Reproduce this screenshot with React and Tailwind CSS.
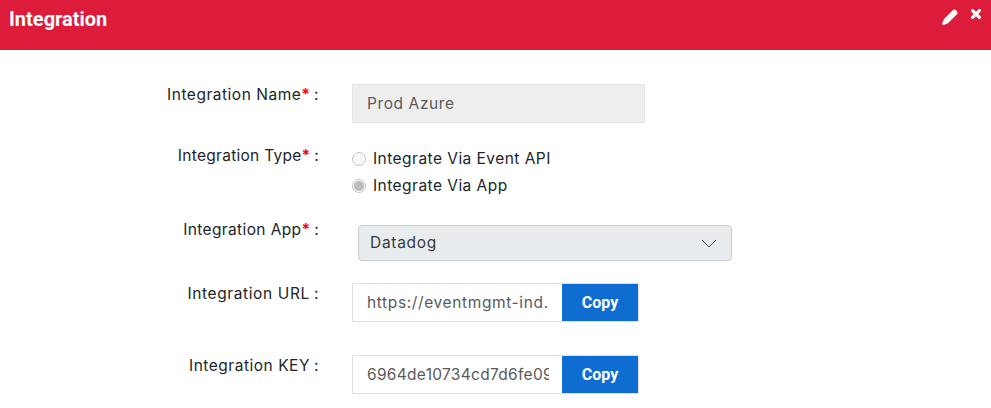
const font = "font-['Inter','Liberation_Sans',sans-serif]";

function Label({ text, required, className }) {
  return (
    <div className={"w-[319px] shrink-0 text-right text-[15.5px] leading-5 text-[#212529] " + className}>
      {text}
      {required && <span className="font-bold tracking-normal text-[#ff0000]">*</span>}
      <span className="ml-1">:</span>
    </div>
  );
}

function Radio({ checked, label }) {
  return (
    <div className="flex h-[27px] items-center">
      <span className="flex h-[14px] w-[14px] items-center justify-center rounded-full border border-[#c4c4c4] bg-[#f8f8f8]">
        {checked && <span className="h-[10px] w-[10px] rounded-full bg-[#bdbdbd]" />}
      </span>
      <span className="ml-[7px] pt-[1px] text-[15.5px] tracking-[0.46px] text-[#212529]">{label}</span>
    </div>
  );
}

function CopyField({ value, className, valueClass }) {
  return (
    <div className={"flex h-[39px] w-[287px] border border-[#dfdfdf] " + className}>
      <div className="w-[209px] pl-[14px]">
        <div className={"w-[182px] overflow-hidden whitespace-nowrap text-[15.5px] leading-[37px] text-[#5a5a5a] " + valueClass}>{value}</div>
      </div>
      <button className="h-[37px] w-[76px] bg-[#0f6cd0] font-['Roboto',sans-serif] text-[16px] font-bold text-white">Copy</button>
    </div>
  );
}

export default function App() {
  return (
    <div className={"h-[408px] w-[991px] overflow-hidden bg-white " + font}>
      <div className="flex h-[50px] items-start justify-between bg-[#dc1c3a] pl-[9px] pr-[10px] text-white">
        <h1 className="mt-[7px] font-['Roboto',sans-serif] text-[20px] font-bold leading-6">Integration</h1>
        <div className="mt-[9px] flex items-start gap-[13px]">
          <svg width="16" height="16" viewBox="0 0 16 16" fill="white">
            <path d="M10.6 1.4c1-1 2.4-1 3.3-.2l.9.9c.9.9.9 2.3-.1 3.3L6 14.2 1.6 15.9c-.9.3-1.8-.6-1.4-1.5L2 10z" />
          </svg>
          <svg width="10" height="10" viewBox="0 0 10 10" stroke="white" strokeWidth="3.2" strokeLinecap="round">
            <path d="M1.6 1.6l6.8 6.8M8.4 1.6L1.6 8.4" />
          </svg>
        </div>
      </div>

      <div className="h-[34px]" />

      <div className="flex h-[39px]">
        <Label text="Integration Name" required className="pt-[1px] tracking-[0.52px]" />
        <div className="ml-[33px] flex h-[39px] w-[293px] items-center border border-[#e4e4e4] bg-[#eeeeee] pl-[14px] text-[15.5px] tracking-[0.6px] text-[#5a5a5a]">
          Prod Azure
        </div>
      </div>

      <div className="mt-[22px] flex">
        <Label text="Integration Type" required className="pt-[1px] tracking-[0.28px]" />
        <div className="ml-[33px] flex flex-col">
          <Radio label="Integrate Via Event API" />
          <Radio checked label="Integrate Via App" />
        </div>
      </div>

      <div className="mt-[26px] flex">
        <Label text="Integration App" required className="-mt-[5px] tracking-[0.38px]" />
        <div className="ml-[39px] flex h-[36px] w-[374px] items-center justify-between rounded-[4px] border border-[#c9cdd1] bg-[#e9ecef] pl-[11px] pr-[14px] text-[15.5px] tracking-[0.7px] text-[#343a40]">
          Datadog
          <svg width="16" height="9" viewBox="0 0 16 9" fill="none" stroke="#495057" strokeWidth="1">
            <path d="M1 1l7 7 7-7" />
          </svg>
        </div>
      </div>

      <div className="mt-[22px] flex">
        <Label text="Integration URL" className="pt-[1px] tracking-[0.62px]" />
        <CopyField className="ml-[33px]" valueClass="tracking-[0.62px]" value="https://eventmgmt-ind." />
      </div>

      <div className="mt-[33px] flex">
        <Label text="Integration KEY" className="pt-[1px] tracking-[0.52px]" />
        <CopyField className="ml-[33px]" valueClass="tracking-[0.3px]" value="6964de10734cd7d6fe09" />
      </div>
    </div>
  );
}
